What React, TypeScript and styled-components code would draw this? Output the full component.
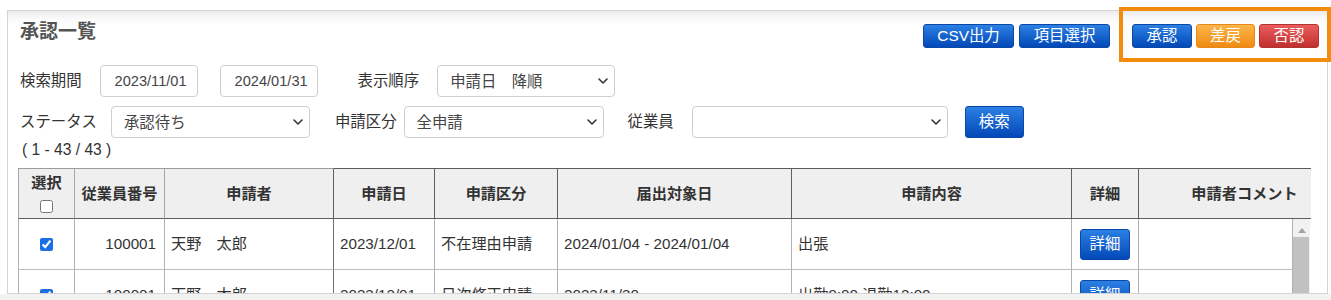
import React from "react";
import styled, { createGlobalStyle } from "styled-components";

const Global = createGlobalStyle`
  html, body { margin: 0; padding: 0; background: #fff; }
  body { font-family: "Liberation Sans", "Noto Sans CJK JP", sans-serif; color: #333; }
  *, *::before, *::after { box-sizing: border-box; }
`;

const Page = styled.div`
  position: relative;
  width: 1331px;
  height: 300px;
  overflow: hidden;
  display: flex;
  flex-direction: column;
`;

const PanelArea = styled.div`
  padding: 10px 0 0 7px;
`;

const Panel = styled.section`
  width: 1321px;
  height: 284px;
  border: 1px solid #d4d4d4;
  background: linear-gradient(#ebebeb 0, #fafafa 8px, #fff 14px);
  padding: 0 10px;
  overflow: hidden;
`;

const Footer = styled.div`
  flex: 1;
  background: #f2f2f2;
`;

const Highlight = styled.div`
  position: absolute;
  left: 1119px;
  top: 7px;
  width: 212px;
  height: 55px;
  border: 4px solid #f28c0a;
  pointer-events: none;
`;

const TopBar = styled.div`
  display: flex;
  align-items: flex-start;
  height: 54px;
  margin-right: -2px;
`;

const Title = styled.h1`
  margin: 9px 0 0 2px;
  font-size: 19px;
  line-height: 24px;
  font-weight: bold;
  color: #555;
`;

const ButtonGroup = styled.div<{ $ml?: string; $gap: number }>`
  display: flex;
  gap: ${(p) => p.$gap}px;
  margin-left: ${(p) => p.$ml ?? "0"};
  margin-top: 13px;
`;

type Tone = "blue" | "orange" | "red";
const tones: Record<Tone, { top: string; bottom: string; border: string }> = {
  blue: { top: "#2b7fe3", bottom: "#0349b8", border: "#0a48a8" },
  orange: { top: "#fcb54a", bottom: "#f08b12", border: "#e5891a" },
  red: { top: "#ea5d5d", bottom: "#c0302e", border: "#b33232" },
};

const Btn = styled.button<{ $w: number; $h?: number; $tone?: Tone }>`
  width: ${(p) => p.$w}px;
  height: ${(p) => p.$h ?? 24}px;
  padding: 0;
  border-radius: 3px;
  border: 1px solid ${(p) => tones[p.$tone ?? "blue"].border};
  background: linear-gradient(
    ${(p) => tones[p.$tone ?? "blue"].top},
    ${(p) => tones[p.$tone ?? "blue"].bottom}
  );
  color: #fff;
  font-family: inherit;
  font-size: 15.4px;
  line-height: 20px;
  cursor: pointer;
  display: flex;
  align-items: center;
  justify-content: center;
`;

const FilterRow = styled.div<{ $mb?: number }>`
  display: flex;
  align-items: center;
  height: 32px;
  margin-bottom: ${(p) => p.$mb ?? 0}px;
`;

const Label = styled.span<{ $ml: number }>`
  margin-left: ${(p) => p.$ml}px;
  font-size: 15.4px;
  line-height: 20px;
  color: #333;
  white-space: nowrap;
`;

const TextBox = styled.input<{ $w: number; $ml: number }>`
  width: ${(p) => p.$w}px;
  height: 32px;
  margin-left: ${(p) => p.$ml}px;
  border: 1px solid #cfcfcf;
  border-radius: 4px;
  padding: 0 0 0 14px;
  font-family: inherit;
  font-size: 14.6px;
  color: #444;
  background: #fff;
`;

const SelectWrap = styled.div<{ $w: number; $ml: number }>`
  position: relative;
  width: ${(p) => p.$w}px;
  height: 32px;
  margin-left: ${(p) => p.$ml}px;
`;

const Select = styled.select`
  appearance: none;
  width: 100%;
  height: 100%;
  border: 1px solid #cfcfcf;
  border-radius: 4px;
  padding: 0 0 0 12px;
  font-family: inherit;
  font-size: 15.4px;
  color: #444;
  background: #fff;
`;

const Chevron = styled.svg`
  position: absolute;
  right: 7px;
  top: 13px;
  pointer-events: none;
`;

const SearchBtnWrap = styled.div`
  margin-left: 17px;
`;

const Count = styled.div`
  margin-left: 4px;
  font-size: 15.6px;
  line-height: 24px;
  color: #333;
  height: 24px;
`;

const TableBlock = styled.div`
  margin-top: 6px;
  width: 1293px;
`;

const HeadClip = styled.div`
  width: 1293px;
  overflow: hidden;
`;

const Table = styled.table<{ $w: number }>`
  width: ${(p) => p.$w}px;
  table-layout: fixed;
  border-collapse: separate;
  border-spacing: 0;
`;

const HeadCell = styled.th<{ $w: number; $frozen?: boolean; $dark?: boolean; $first?: boolean; $top?: boolean }>`
  width: ${(p) => p.$w}px;
  height: 51px;
  padding: ${(p) => (p.$top ? "4px 0 0" : "0")};
  background: #efefef;
  border-top: 1px solid ${(p) => (p.$frozen ? "#9c9c9c" : "#5a5a5a")};
  border-right: 1px solid ${(p) => (p.$dark ? "#5f5f5f" : "#a6a6a6")};
  border-bottom: 1px solid #5f5f5f;
  border-left: ${(p) => (p.$first ? "1px solid #a6a6a6" : "none")};
  font-weight: bold;
  font-size: 15.2px;
  line-height: 20px;
  color: #333;
  text-align: center;
  vertical-align: ${(p) => (p.$top ? "top" : "middle")};
  white-space: nowrap;
`;

const HeadStack = styled.div`
  display: flex;
  flex-direction: column;
  align-items: center;
  gap: 7px;
`;

const Check = styled.input`
  margin: 0;
  width: 13px;
  height: 13px;
  accent-color: #1a6fe6;
`;

const BodyArea = styled.div`
  display: flex;
  align-items: flex-start;
`;

const Cell = styled.td<{ $w?: number; $align?: "left" | "right" | "center"; $dark?: boolean; $first?: boolean }>`
  ${(p) => (p.$w ? `width: ${p.$w}px;` : "")}
  height: 51px;
  padding: 0 ${(p) => (p.$align === "right" ? "8px" : "6px")} 0 ${(p) => (p.$align === "right" ? "0" : "6px")};
  border-right: 1px solid ${(p) => (p.$dark ? "#6e6e6e" : "#b2b2b2")};
  border-bottom: 1px solid #bdbdbd;
  border-left: ${(p) => (p.$first ? "1px solid #b2b2b2" : "none")};
  font-size: 15.2px;
  line-height: 20px;
  color: #333;
  text-align: ${(p) => p.$align ?? "left"};
  vertical-align: middle;
  white-space: nowrap;
  overflow: hidden;
`;

const CellCenter = styled.div`
  display: flex;
  justify-content: center;
  align-items: center;
`;

const Scrollbar = styled.div`
  width: 17px;
  height: 120px;
  background: #f1f1f1;
  display: flex;
  flex-direction: column;
`;

const ScrollArrow = styled.div`
  height: 18px;
  display: flex;
  align-items: center;
  justify-content: center;
  padding-top: 4px;
`;

const ScrollThumb = styled.div`
  flex: 1;
  margin-right: 1px;
  background: #c1c1c1;
`;

const widths = [57, 90, 169, 101, 123, 234, 280, 67];

type Row = {
  no: string;
  name: string;
  date: string;
  kind: string;
  target: string;
  content: string;
};

const rows: Row[] = [
  {
    no: "100001",
    name: "天野　太郎",
    date: "2023/12/01",
    kind: "不在理由申請",
    target: "2024/01/04 - 2024/01/04",
    content: "出張",
  },
  {
    no: "100001",
    name: "天野　太郎",
    date: "2023/12/01",
    kind: "日次修正申請",
    target: "2023/11/30",
    content: "出勤9:00 退勤12:00",
  },
];

function SelectField({ w, ml, value }: { w: number; ml: number; value: string }) {
  return (
    <SelectWrap $w={w} $ml={ml}>
      <Select defaultValue={value}>
        <option value={value}>{value}</option>
      </Select>
      <Chevron width="10" height="6" viewBox="0 0 10 6">
        <path d="M1 1 L5 5 L9 1" fill="none" stroke="#333" strokeWidth="1.6" strokeLinecap="round" strokeLinejoin="round" />
      </Chevron>
    </SelectWrap>
  );
}

export default function App() {
  return (
    <>
      <Global />
      <Page>
        <PanelArea>
          <Panel>
            <TopBar>
              <Title>承認一覧</Title>
              <ButtonGroup $ml="auto" $gap={5}>
                <Btn $w={91}>CSV出力</Btn>
                <Btn $w={91}>項目選択</Btn>
              </ButtonGroup>
              <ButtonGroup $ml="22px" $gap={4}>
                <Btn $w={60}>承認</Btn>
                <Btn $w={59} $tone="orange">差戻</Btn>
                <Btn $w={60} $tone="red">否認</Btn>
              </ButtonGroup>
            </TopBar>

            <FilterRow $mb={9}>
              <Label $ml={2}>検索期間</Label>
              <TextBox $w={98} $ml={18} defaultValue="2023/11/01" />
              <TextBox $w={98} $ml={22} defaultValue="2024/01/31" />
              <Label $ml={40}>表示順序</Label>
              <SelectField w={178} ml={18} value="申請日　降順" />
            </FilterRow>

            <FilterRow>
              <Label $ml={2}>ステータス</Label>
              <SelectField w={199} ml={14} value="承認待ち" />
              <Label $ml={25}>申請区分</Label>
              <SelectField w={200} ml={7} value="全申請" />
              <Label $ml={24}>従業員</Label>
              <SelectField w={256} ml={18} value="" />
              <SearchBtnWrap>
                <Btn $w={59} $h={32}>検索</Btn>
              </SearchBtnWrap>
            </FilterRow>

            <Count>( 1 - 43 / 43 )</Count>

            <TableBlock>
              <HeadClip>
                <Table $w={1333}>
                  <thead>
                    <tr>
                      <HeadCell $w={57} $frozen $first $top>
                        <HeadStack>
                          <span>選択</span>
                          <Check type="checkbox" />
                        </HeadStack>
                      </HeadCell>
                      <HeadCell $w={90} $frozen>従業員番号</HeadCell>
                      <HeadCell $w={169} $frozen $dark>申請者</HeadCell>
                      <HeadCell $w={101} $dark>申請日</HeadCell>
                      <HeadCell $w={123} $dark>申請区分</HeadCell>
                      <HeadCell $w={234} $dark>届出対象日</HeadCell>
                      <HeadCell $w={280} $dark>申請内容</HeadCell>
                      <HeadCell $w={67} $dark>詳細</HeadCell>
                      <HeadCell $w={212} $dark>申請者コメント</HeadCell>
                    </tr>
                  </thead>
                </Table>
              </HeadClip>
              <BodyArea>
                <Table $w={1275}>
                  <tbody>
                    {rows.map((r, i) => (
                      <tr key={i}>
                        <Cell $w={widths[0]} $first $align="center">
                          <CellCenter>
                            <Check type="checkbox" defaultChecked />
                          </CellCenter>
                        </Cell>
                        <Cell $w={widths[1]} $align="right">{r.no}</Cell>
                        <Cell $w={widths[2]} $dark>{r.name}</Cell>
                        <Cell $w={widths[3]}>{r.date}</Cell>
                        <Cell $w={widths[4]}>{r.kind}</Cell>
                        <Cell $w={widths[5]}>{r.target}</Cell>
                        <Cell $w={widths[6]}>{r.content}</Cell>
                        <Cell $w={widths[7]} $align="center">
                          <CellCenter>
                            <Btn $w={50} $h={31}>詳細</Btn>
                          </CellCenter>
                        </Cell>
                        <Cell $w={154} />
                      </tr>
                    ))}
                  </tbody>
                </Table>
                <Scrollbar>
                  <ScrollArrow>
                    <svg width="8" height="5" viewBox="0 0 8 5">
                      <path d="M0 5 L4 0 L8 5 Z" fill="#a3a3a3" />
                    </svg>
                  </ScrollArrow>
                  <ScrollThumb />
                </Scrollbar>
              </BodyArea>
            </TableBlock>
          </Panel>
        </PanelArea>
        <Footer />
        <Highlight />
      </Page>
    </>
  );
}
